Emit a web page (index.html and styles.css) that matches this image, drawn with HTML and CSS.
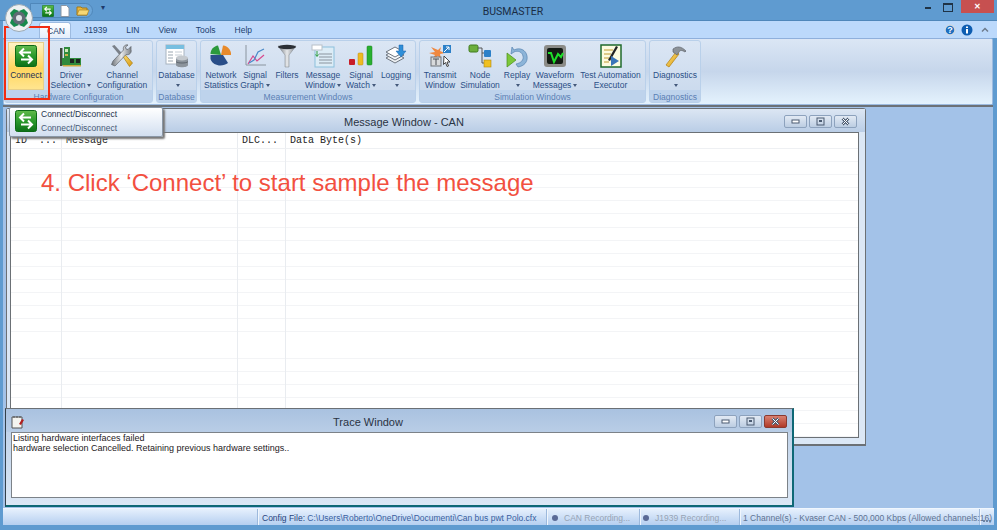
FILE: index.html
```html
<!DOCTYPE html>
<html>
<head>
<meta name="viewport" content="width=device-width, initial-scale=1.0"/>
<title>BUSMASTER</title>
<link rel="stylesheet" href="styles.css">
</head>
<body>

<svg class="defs" width="0" height="0">
  <defs>
    <linearGradient id="gConn" x1="0" y1="0" x2="0" y2="1">
      <stop offset="0" stop-color="#62bb4c"/><stop offset=".5" stop-color="#2a9a2c"/><stop offset="1" stop-color="#0d7018"/>
    </linearGradient>
    <linearGradient id="gHandle" x1="0" y1="0" x2="1" y2="1">
      <stop offset="0" stop-color="#ffe27a"/><stop offset="1" stop-color="#d99a10"/>
    </linearGradient>
    <linearGradient id="gMetal" x1="0" y1="0" x2="1" y2="0">
      <stop offset="0" stop-color="#6d7278"/><stop offset=".5" stop-color="#e6e8ea"/><stop offset="1" stop-color="#7d8288"/>
    </linearGradient>
    <symbol id="icoConnect" viewBox="0 0 22 22">
      <rect x=".5" y=".5" width="21" height="21" rx="2" fill="url(#gConn)" stroke="#0c6a16"/>
      <path d="M16 7.500H5M9 3.500l-4 4 4 4" fill="none" stroke="#fff" stroke-width="2"/>
      <path d="M6 14.500h11M13 10.500l4 4-4 4" fill="none" stroke="#fff" stroke-width="2"/>
    </symbol>
    <symbol id="icoMin" viewBox="0 0 9 9"><rect x="1" y="3" width="7" height="3" fill="#fff" stroke="#4a5a70"/></symbol>
    <symbol id="icoMax" viewBox="0 0 9 9"><rect x="1" y="1" width="7" height="7" fill="none" stroke="#4a5a70"/><rect x="3" y="3" width="3" height="2" fill="#4a5a70"/></symbol>
    <symbol id="icoClose" viewBox="0 0 9 9"><path d="M1.500 1.500l6 6m0-6l-6 6" stroke="#4a5a70" stroke-width="2.600"/><path d="M1.500 1.500l6 6m0-6l-6 6" stroke="#fff" stroke-width="1"/></symbol>
  </defs>
</svg>

<div class="app">

  <div class="titlebar">
    <div class="orb">
      <svg width="28" height="28" viewBox="0 0 28 28">
        <circle cx="14" cy="14" r="13.500" fill="#eef1f2" stroke="#9aa8b4"/>
        <path d="M5 9l4-4 5 2-7 7zM23 9l-4-4-5 2 7 7zM5 19l4 4 5-2-7-7zM23 19l-4 4-5-2 7-7z" fill="#178a4c"/>
        <circle cx="14" cy="14" r="6.500" fill="#5f6a74"/>
        <circle cx="14" cy="14" r="3" fill="#dfe4e8"/>
      </svg>
    </div>
    <div class="quick">
      <svg width="12" height="12"><use href="#icoConnect"/></svg>
      <svg width="10" height="12" viewBox="0 0 10 12"><path d="M1 .5h5.500L9 3v8.500H1z" fill="#fff" stroke="#8a97a5"/></svg>
      <svg width="14" height="12" viewBox="0 0 14 12"><path d="M1 2h4l1 1h5v7H1z" fill="#e9b63c" stroke="#a37818"/><path d="M3 5h10l-2 5H1z" fill="#f7d774" stroke="#a37818" stroke-width=".6"/></svg>
    </div>
    <span class="quickMore">&#9662;</span>
    <div class="appName">BUSMASTER</div>
    <div class="winBtns">
      <span class="wMin"></span>
      <span class="wMax"></span>
      <span class="wClose">&#10005;</span>
    </div>
  </div>

  <div class="tabs">
    <span class="tab active">CAN</span>
    <span class="tab">J1939</span>
    <span class="tab">LIN</span>
    <span class="tab">View</span>
    <span class="tab">Tools</span>
    <span class="tab">Help</span>
    <div class="tabIcons">
      <svg width="12" height="12" viewBox="0 0 12 12"><circle cx="6" cy="6" r="5" fill="#1f6fc0" stroke="#cfd8e2" stroke-width="1.500"/><text x="6" y="9" class="helpMark">?</text></svg>
      <svg width="12" height="12" viewBox="0 0 12 12"><circle cx="6" cy="6" r="5.500" fill="#0d5cb0"/><rect x="5" y="5" width="2" height="4.500" fill="#fff"/><rect x="5" y="2.500" width="2" height="1.500" fill="#fff"/></svg>
      <svg class="collapse" width="8" height="6" viewBox="0 0 8 6"><path d="M1 4.500l3-3 3 3" fill="none" stroke="#6e7c8c" stroke-width="1.500"/></svg>
    </div>
  </div>

  <div class="ribbon">

    <div class="group gHardware">
      <div class="items">
        <div class="item hot">
          <svg class="ico" width="22" height="22"><use href="#icoConnect"/></svg>
          <span>Connect</span>
        </div>
        <div class="item w54">
          <svg class="ico" width="24" height="24" viewBox="0 0 24 24">
            <rect x="1" y="4" width="2.500" height="18" fill="#3c4a3a"/>
            <path d="M5 3h6v11h11v7H3v-7h2z" fill="#2f8a3c"/>
            <rect x="6" y="5" width="3" height="3" fill="#cfe8b8"/><rect x="6" y="10" width="3" height="2" fill="#c8b24a"/>
            <rect x="11" y="15" width="4" height="4" fill="#1c2620"/><rect x="17" y="15" width="4" height="4" fill="#1c2620"/>
            <rect x="4" y="21" width="18" height="1.500" fill="#c8a83a"/>
          </svg>
          <span>Driver</span>
          <span>Selection<i class="dd"></i></span>
        </div>
        <div class="item w48">
          <svg class="ico" width="24" height="24" viewBox="0 0 24 24">
            <path d="M2 2l2.500-1 9 10-2 2.500z" fill="#7a8088"/>
            <path d="M12 11l2-1.500 8.500 9.500-3 3.500z" fill="url(#gHandle)" stroke="#a87c10" stroke-width=".7"/>
            <path d="M21 2.500l-3 3-2-.5-.5-2L18 1c-3-.8-5.500 2-4.500 5L3 17l-1.500 3.500L5 22 16 10.500c3 1 6-1.500 5-5z" fill="url(#gMetal)" stroke="#5c6268" stroke-width=".7"/>
          </svg>
          <span>Channel</span>
          <span>Configuration</span>
        </div>
      </div>
      <div class="groupName">Hardware Configuration</div>
    </div>

    <div class="group gDatabase">
      <div class="items">
        <div class="item w39">
          <svg class="ico" width="24" height="24" viewBox="0 0 24 24">
            <rect x="1" y="1" width="18" height="19" fill="#fff" stroke="#a8b4c0"/>
            <rect x="1" y="1" width="18" height="4" fill="#78bfe0"/>
            <path d="M3 8h5M3 11h5M3 14h5M3 17h5" stroke="#9aa6b0"/><path d="M10 8h7M10 11h7" stroke="#c4ccd4"/>
            <path d="M11 14v7c0 3 12 3 12 0v-7z" fill="#8c949c"/><ellipse cx="17" cy="14" rx="6" ry="2.500" fill="#c4c9ce"/>
            <path d="M11 17.500c1 2 11 2 12 0" fill="none" stroke="#5e666e"/>
          </svg>
          <span>Database</span>
          <span class="onlyArrow"><i class="dd"></i></span>
        </div>
      </div>
      <div class="groupName">Database</div>
    </div>

    <div class="group gMeasure">
      <div class="items">
        <div class="item w40">
          <svg class="ico" width="24" height="24" viewBox="0 0 24 24">
            <path d="M12 11L9 1.500C5 2 1.500 5.500 1.500 10z" fill="#2c9a3c"/>
            <path d="M12 11l2-9.500c5 .5 8.500 5 8 9.500z" fill="#e88a2a"/>
            <path d="M1.500 11H14l5 8c-5 4-15 3.500-17.500-4z" fill="#2a4e88"/>
            <path d="M15 12h7.500c0 2.500-1 4.500-2.500 6z" fill="#dfe6ee"/>
          </svg>
          <span>Network</span>
          <span>Statistics</span>
        </div>
        <div class="item w28">
          <svg class="ico" width="24" height="24" viewBox="0 0 24 24">
            <path d="M3 1v20h20" fill="none" stroke="#8a949e"/>
            <path d="M5 20l5-8 4 5 7-6" fill="none" stroke="#d8488c" stroke-width="1.200"/>
            <path d="M6 19l5-3 4-8 6-3" fill="none" stroke="#4a8ac8" stroke-width="1.200"/>
          </svg>
          <span>Signal</span>
          <span>Graph<i class="dd"></i></span>
        </div>
        <div class="item w36">
          <svg class="ico" width="24" height="24" viewBox="0 0 24 24">
            <path d="M3 2h18l-7 9v12h-4V11z" fill="url(#gMetal)" stroke="#8a9098" stroke-width=".6"/>
            <ellipse cx="12" cy="3" rx="9" ry="2.200" fill="#2c3036"/>
          </svg>
          <span>Filters</span>
        </div>
        <div class="item w36">
          <svg class="ico" width="24" height="24" viewBox="0 0 24 24">
            <rect x="4" y="3" width="19" height="20" fill="#dcecf6" stroke="#8cc0dc"/>
            <rect x="1" y="1" width="10" height="5" fill="#fff" stroke="#b8c0c8"/>
            <path d="M8 10h13M8 13h13M8 16h13M8 19h13" stroke="#8a949e"/>
            <path d="M6 7v5M4.500 10.500L6 12.500l1.500-2" stroke="#2c9a3c" fill="none"/>
          </svg>
          <span>Message</span>
          <span>Window<i class="dd"></i></span>
        </div>
        <div class="item w40">
          <svg class="ico" width="24" height="24" viewBox="0 0 24 24">
            <rect x="0" y="15" width="6" height="6" rx="1" fill="#c81e28"/>
            <rect x="9" y="9" width="5" height="12" rx="1" fill="#eebb22" stroke="#b88a10" stroke-width=".5"/>
            <rect x="18" y="2" width="5" height="19" rx="1" fill="#28b030" stroke="#18801e" stroke-width=".5"/>
          </svg>
          <span>Signal</span>
          <span>Watch<i class="dd"></i></span>
        </div>
        <div class="item w30">
          <svg class="ico" width="24" height="24" viewBox="0 0 24 24">
            <path d="M2 14l9-5 9 5-9 5z" fill="#eef1f4" stroke="#6e7680"/>
            <path d="M2 11l9-5 9 5-9 5z" fill="#f6f8fa" stroke="#6e7680"/>
            <path d="M2 8l9-5 9 5-9 5z" fill="#fff" stroke="#6e7680"/>
            <path d="M15 1h4v6h3l-5 6-5-6h3z" fill="#2f8fd8" stroke="#1c62a8" stroke-width=".5"/>
          </svg>
          <span>Logging</span>
          <span class="onlyArrow"><i class="dd"></i></span>
        </div>
      </div>
      <div class="groupName">Measurement Windows</div>
    </div>

    <div class="group gSim">
      <div class="items">
        <div class="item w40">
          <svg class="ico" width="24" height="24" viewBox="0 0 24 24">
            <path d="M10 6L3 3l4 5-6 1 6 2-3 5 6-4 3 3-1-5 5-1-5-2 1-4z" fill="#f08840"/>
            <rect x="3" y="13" width="10" height="9" fill="#d8dadc" stroke="#6e7278"/>
            <path d="M5 15h6M8 15v6" stroke="#4a4e54"/>
            <rect x="15" y="1" width="8" height="8" fill="#2c80c8"/><path d="M16 8l5-5m-3 0h3v3" stroke="#fff" fill="none"/>
            <path d="M16 12l6 6-3 0 1.500 4-1.500.5-1.500-4-2 2z" fill="#fff" stroke="#444"/>
          </svg>
          <span>Transmit</span>
          <span>Window</span>
        </div>
        <div class="item w40">
          <svg class="ico" width="24" height="24" viewBox="0 0 24 24">
            <rect x="1" y="1" width="9" height="7" rx="1.500" fill="#6cae3c" stroke="#3e7a1c"/>
            <path d="M10 4h4v15h3M14 9h3" fill="none" stroke="#555"/>
            <rect x="16" y="6" width="7" height="7" rx="1" fill="#2c80c8"/>
            <rect x="16" y="16" width="7" height="7" fill="#f0c020" stroke="#b08810" stroke-width=".6"/>
          </svg>
          <span>Node</span>
          <span>Simulation</span>
        </div>
        <div class="item w34">
          <svg class="ico" width="24" height="24" viewBox="0 0 24 24">
            <path d="M7 3l-1 7 3-2c4-2 8 0 9 4s-2 7-7 8l2 3c6-1 10-5 9-11S15 3 9 6z" fill="#8cb4d8" stroke="#5884b0" stroke-width=".7"/>
            <path d="M2 9l9 7-9 7z" fill="#7cc83a" stroke="#4a8c1c" stroke-width=".7"/>
          </svg>
          <span>Replay</span>
          <span class="onlyArrow"><i class="dd"></i></span>
        </div>
        <div class="item w42">
          <svg class="ico" width="24" height="24" viewBox="0 0 24 24">
            <rect x="1" y="1" width="22" height="22" rx="3" fill="#8c8c88"/>
            <rect x="4" y="4" width="16" height="16" rx="2" fill="#141a14"/>
            <path d="M5 9l3 0 3 9 4-8 3 3 2-4" fill="none" stroke="#1ee02a" stroke-width="2"/>
          </svg>
          <span>Waveform</span>
          <span>Messages<i class="dd"></i></span>
        </div>
        <div class="item w69">
          <svg class="ico" width="24" height="24" viewBox="0 0 24 24">
            <rect x="2" y="1" width="20" height="22" fill="#fdfbe0" stroke="#1f6a2c" stroke-width="1.500"/>
            <path d="M5 6h9M5 10h7M5 14h5M5 18h5" stroke="#c09a30"/>
            <path d="M17 2l2 1-8 14-2-1z" fill="#222"/>
            <path d="M12 12l8 5-8 5z" fill="#3a74b8"/>
          </svg>
          <span>Test Automation</span>
          <span>Executor</span>
        </div>
      </div>
      <div class="groupName">Simulation Windows</div>
    </div>

    <div class="group gDiag">
      <div class="items">
        <div class="item w50">
          <svg class="ico" width="24" height="24" viewBox="0 0 24 24">
            <path d="M3 21l10-13 3 2L6 23z" fill="url(#gHandle)" stroke="#b07c10" stroke-width=".7"/>
            <path d="M10 5c4-3 8-3 13 2l-1 1c-3-2-5-2-6 0l-2 3-4-3z" fill="#8c9298" stroke="#50565c" stroke-width=".6"/>
          </svg>
          <span>Diagnostics</span>
          <span class="onlyArrow"><i class="dd"></i></span>
        </div>
      </div>
      <div class="groupName">Diagnostics</div>
    </div>

  </div>

  <div class="mdi">

    <div class="win msgWin">
      <div class="winTitle">
        <span class="winName">Message Window - CAN</span>
        <div class="ctlBtns">
          <span class="ctl"><svg width="9" height="9"><use href="#icoMin"/></svg></span>
          <span class="ctl"><svg width="9" height="9"><use href="#icoMax"/></svg></span>
          <span class="ctl"><svg width="9" height="9"><use href="#icoClose"/></svg></span>
        </div>
      </div>
      <div class="msgList">
        <div class="msgHead">
          <span class="colId">ID&nbsp;&nbsp;...</span>
          <span class="colMsg">Message</span>
          <span class="colDlc">DLC...</span>
          <span class="colData">Data Byte(s)</span>
        </div>
        <div class="msgRows">
          <i class="colId"></i><i class="colMsg"></i><i class="colDlc"></i><i class="colData"></i>
        </div>
      </div>
    </div>

    <div class="note">4. Click ‘Connect’ to start sample the message</div>

    <div class="win traceWin">
      <div class="winTitle">
        <svg class="traceIco" width="15" height="14" viewBox="0 0 15 14">
          <path d="M1 2h10v11H1z" fill="#f4f4f0" stroke="#555"/>
          <path d="M3 1v2M6 1v2M9 1v2" stroke="#555"/>
          <path d="M8 9l3-5 2 1-3 5z" fill="#b02020"/>
        </svg>
        <span class="winName">Trace Window</span>
        <div class="ctlBtns">
          <span class="ctl"><svg width="9" height="9"><use href="#icoMin"/></svg></span>
          <span class="ctl"><svg width="9" height="9"><use href="#icoMax"/></svg></span>
          <span class="ctl ctlRed"><svg width="9" height="9"><use href="#icoClose"/></svg></span>
        </div>
      </div>
      <div class="traceText">
        <div>Listing hardware interfaces failed</div>
        <div>hardware selection Cancelled. Retaining previous hardware settings..</div>
      </div>
    </div>

    <div class="tip">
      <svg width="22" height="22"><use href="#icoConnect"/></svg>
      <div class="tipText">
        <b>Connect/Disconnect</b>
        <span>Connect/Disconnect</span>
      </div>
    </div>

  </div>

  <div class="status">
    <div class="pane paneBlank"></div>
    <div class="pane paneCfg"><b>Config File:</b> C:\Users\Roberto\OneDrive\Documenti\Can bus pwt Polo.cfx</div>
    <div class="pane paneRec paneCan"><i class="dot"></i>CAN Recording...</div>
    <div class="pane paneRec paneJ"><i class="dot"></i>J1939 Recording...</div>
    <div class="pane paneChan">1 Channel(s) - Kvaser CAN - 500,000 Kbps (Allowed channels:16)</div>
    <div class="grip">
      <i></i><i></i><i></i>
    </div>
  </div>

  <div class="redBox"></div>
</div>

</body>
</html>
```

FILE: styles.css
```css
* {
    box-sizing: border-box;
}

html, body {
    margin: 0;
    height: 100%;
    overflow: hidden;
}

body {
    font-family: "Liberation Sans", Arial, sans-serif;
    font-size: 8.500px;
    background: #5f9bd0;
}

.defs {
    position: absolute;
}

.app {
    position: relative;
    display: flex;
    flex-direction: column;
    width: 997px;
    height: 530px;
    padding-bottom: 5px;
}

/* title bar */
.titlebar {
    position: relative;
    display: flex;
    align-items: flex-start;
    height: 21px;
    background: #5f9bd0;
    border-bottom: 1px solid #4f87ba;
}

.orb {
    position: absolute;
    left: 5px;
    top: 4px;
    z-index: 3;
    width: 28px;
    height: 28px;
}

.orb svg {
    display: block;
}

.quick {
    display: flex;
    align-items: center;
    gap: 6px;
    height: 15px;
    margin: 3px 0 0 30px;
    padding: 0 2px 0 11px;
    background: #6ba5d8;
    border: 1px solid #4f87ba;
    border-radius: 0 8px 8px 0;
}

.quickMore {
    margin: 3px 0 0 8px;
    font-size: 8px;
    color: #1d3a6a;
}

.appName {
    flex: 1;
    margin: 5px 2px 0 0;
    font-family: Roboto, "Liberation Sans", sans-serif;
    font-size: 10.500px;
    text-align: center;
    color: #1a2c44;
}

.winBtns {
    display: flex;
    align-items: flex-start;
    margin-right: 3px;
}

.wMin, .wMax {
    position: relative;
    width: 16px;
    height: 13px;
    margin-right: 3px;
}

.wMin::after {
    content: "";
    position: absolute;
    left: 2px;
    top: 7px;
    width: 6px;
    height: 2px;
    background: #1f3346;
}

.wMax::after {
    content: "";
    position: absolute;
    left: 1px;
    top: 3px;
    width: 8px;
    height: 6px;
    border: 1px solid #1f3346;
    border-top-width: 2px;
}

.wClose {
    width: 33px;
    height: 13px;
    line-height: 13px;
    font-size: 8px;
    font-weight: bold;
    text-align: center;
    color: #fff;
    background: #c75050;
}

/* tabs */
.tabs {
    position: relative;
    display: flex;
    align-items: flex-end;
    height: 17px;
    margin: 0 0 0 3px;
    padding-left: 36px;
    background: #bcd9fb;
}

.tab {
    height: 16px;
    line-height: 17px;
    padding: 0 9.500px;
    color: #20406e;
}

.tab.active {
    width: 32px;
    padding: 0 7px;
    margin-right: 3.500px;
    background: linear-gradient(#ffffff, #e4eefa);
    border: 1px solid #9dbbe0;
    border-bottom: none;
    border-radius: 3px 3px 0 0;
}

.tabIcons {
    display: flex;
    align-items: center;
    gap: 5px;
    margin-left: auto;
    margin-right: 8px;
    height: 17px;
}

.collapse {
    margin-left: 3px;
}

.helpMark {
    font-size: 9px;
    font-weight: bold;
    text-anchor: middle;
    fill: #fff;
}

/* ribbon */
.ribbon {
    display: flex;
    gap: 3px;
    height: 67px;
    margin: 0 4px 0 3px;
    padding: 1px 0;
    background: linear-gradient(#dbe6f5, #c6d6eb 50%, #e4f2fd);
    border: 1px solid #9dbbe0;
    border-top-color: #8fb0dc;
    border-radius: 2px;
}

.group {
    display: flex;
    flex-direction: column;
    border: 1px solid #b9d0ea;
    border-radius: 3px;
    background: linear-gradient(#dbe6f4, #c8d8ec);
}

.gHardware {
    width: 149px;
}

.gDatabase {
    width: 41px;
}

.gMeasure {
    width: 216px;
}

.gSim {
    width: 227px;
}

.gDiag {
    width: 52px;
}

.items {
    display: flex;
    flex: 1;
}

.groupName {
    height: 12px;
    line-height: 14px;
    text-align: center;
    color: #5a80b4;
    background: #bed3ec;
}

.item {
    display: flex;
    flex-direction: column;
    align-items: center;
    flex: none;
    line-height: 10px;
    white-space: nowrap;
    color: #2b4f86;
}

.w28 { width: 28px; }
.w30 { width: 30px; }
.w34 { width: 34px; }
.w36 { width: 36px; }
.w39 { width: 39px; }
.w40 { width: 40px; }
.w42 { width: 42px; }
.w48 { width: 48px; }
.w50 { width: 50px; }
.w54 { width: 54px; }
.w69 { width: 69px; }

.ico {
    display: block;
    margin: 3px 0 2px;
    height: 24px;
}

.hot {
    width: 36px;
    height: 48px;
    margin: 1px 0 0 3px;
    color: #1d2f52;
    background: linear-gradient(#fff3c4, #ffd65e 55%, #ffe58f);
    border: 1px solid #e6cf8a;
}

.hot .ico {
    margin: 2px 0 3px;
    height: 22px;
}

.onlyArrow {
    height: 10px;
}

.dd {
    display: inline-block;
    width: 0;
    height: 0;
    margin: 0 0 1px 2px;
    border-left: 2.500px solid transparent;
    border-right: 2.500px solid transparent;
    border-top: 3px solid #44597a;
}

/* work area */
.mdi {
    position: relative;
    flex: 1;
    margin: 0 4px 0 3px;
    background: #a3c2e8;
    border-top: 2px solid #6c7177;
}

.win {
    position: absolute;
    display: flex;
    flex-direction: column;
    background: #dbe7f5;
}

.msgWin {
    left: 3px;
    top: 1px;
    width: 860px;
    height: 338px;
    padding: 0 6px 6px 3px;
    border: 1px solid #6b7075;
    border-bottom-width: 2px;
    border-radius: 3px 3px 0 0;
}

.winTitle {
    position: relative;
    flex: none;
    height: 23px;
    text-align: center;
    line-height: 26px;
    font-size: 11px;
    color: #2a3444;
    background: linear-gradient(#dce6f3, #b9cde6);
}

.msgWin .winTitle {
    margin: 0 -6px 0 -3px;
    padding-right: 64px;
}

.traceWin .winTitle {
    margin: 0 -4px 0 -5px;
    padding-right: 62px;
    background: linear-gradient(#a9c2e0, #b9cde6);
}

.ctlBtns {
    position: absolute;
    right: 8px;
    top: 6px;
    display: flex;
    gap: 2px;
}

.traceWin .ctlBtns {
    right: 5px;
}

.ctl {
    display: flex;
    align-items: center;
    justify-content: center;
    width: 23px;
    height: 13px;
    background: linear-gradient(#e2eaf4, #bccde2);
    border: 1px solid #8da2bd;
    border-radius: 2px;
}

.ctlRed {
    background: linear-gradient(#d98070, #b03a28);
    border-color: #8a3a30;
}

.msgList {
    flex: 1;
    display: flex;
    flex-direction: column;
    background: #fff;
    border: 1px solid #6b7075;
    font-family: "Liberation Mono", monospace;
    font-size: 10px;
    color: #222;
}

.msgHead {
    display: flex;
    flex: none;
    height: 16px;
    line-height: 15px;
    border-bottom: 1px solid #eef0f3;
}

.msgRows {
    flex: 1;
    display: flex;
    background: repeating-linear-gradient(#fff 0, #fff 12.100px, #f3f4f6 12.100px, #f3f4f6 13.100px);
}

.msgHead span {
    padding-left: 4px;
    white-space: pre;
    border-right: 1px solid #e9ecf0;
}

.msgRows i {
    border-right: 1px solid #e9ecf0;
}

.colId {
    width: 51px;
}

.colMsg {
    width: 176px;
}

.colDlc {
    width: 48px;
}

.msgHead .colData, .msgRows .colData {
    flex: 1;
    border-right: none;
}

.note {
    position: absolute;
    left: 38px;
    top: 62px;
    font-size: 24px;
    line-height: 28px;
    color: #f2503f;
}

.traceWin {
    left: 2px;
    top: 301px;
    width: 789px;
    height: 99px;
    padding: 0 4px 7px 5px;
    border: 1px solid #0e6876;
    border-top-color: #6b7075;
    border-left-color: #33404a;
    border-width: 1px 2px 2px 1px;
    background: linear-gradient(#b9cde6, #dbe7f5);
}

.traceIco {
    position: absolute;
    left: 5px;
    top: 6px;
}

.traceText {
    flex: 1;
    padding: 0 1px;
    font-size: 9px;
    line-height: 10px;
    color: #1e2024;
    background: #fff;
    border: 1px solid #7c8288;
}

.tip {
    position: absolute;
    left: 6px;
    top: 0;
    z-index: 3;
    display: flex;
    align-items: center;
    gap: 4px;
    width: 154px;
    height: 30px;
    padding: 0 5px 2px;
    background: linear-gradient(#ffffff, #d2dff0);
    border: 1px solid #8a97a6;
    border-radius: 2px;
    box-shadow: 2px 2px 2px #777;
}

.tipText {
    display: flex;
    flex-direction: column;
    gap: 4px;
    line-height: 10px;
    color: #4a5c78;
}

.tipText b {
    font-weight: normal;
    color: #25344e;
}

/* status bar */
.status {
    display: flex;
    height: 17px;
    margin: 0 3px;
    line-height: 18px;
    white-space: nowrap;
    background: linear-gradient(#e6f0fd, #b5cff0);
    border-top: 1px solid #f0f6fd;
    color: #5d7292;
}

.pane {
    padding-left: 3px;
    border-right: 1px solid #9db9dc;
    box-shadow: 1px 0 0 #f0f6fd;
}

.paneBlank {
    width: 255px;
}

.paneCfg {
    width: 289px;
    padding-left: 4px;
    color: #3a5fa0;
}

.paneCfg b {
    font-weight: normal;
    color: #27447e;
}

.paneRec {
    display: flex;
    align-items: center;
    padding-top: 1px;
    color: #96a3b4;
}

.paneCan {
    width: 93px;
    padding-left: 5px;
}

.paneJ {
    width: 100px;
    padding-left: 3px;
}

.dot {
    width: 6px;
    height: 6px;
    margin-right: 6px;
    border-radius: 50%;
    background: #5a6a96;
}

.paneChan {
    width: 240px;
}

.grip {
    flex: 1;
    display: flex;
    justify-content: flex-end;
    align-items: flex-end;
    gap: 1px;
    padding: 0 3px 3px 0;
}

.grip i {
    width: 2px;
    height: 2px;
    background: #6c84a4;
}

.redBox {
    position: absolute;
    left: 4px;
    top: 26px;
    width: 46px;
    height: 74px;
    border: 2px solid #f22c12;
    pointer-events: none;
}
```
